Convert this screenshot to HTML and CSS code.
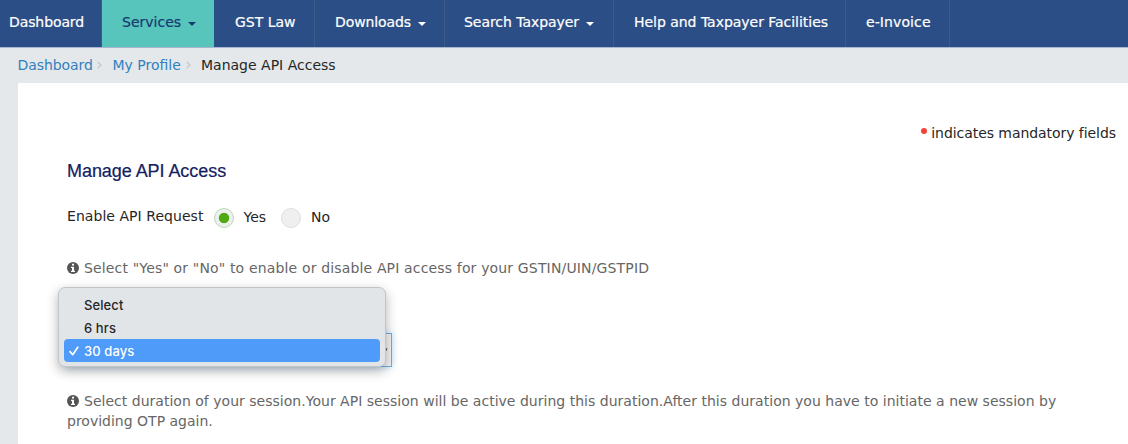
FILE: index.html
```html
<!DOCTYPE html>
<html lang="en">
<head>
<meta charset="utf-8">
<title>Manage API Access</title>
<link rel="stylesheet" href="styles.css">
</head>
<body>
<svg class="defs" width="0" height="0"><symbol id="info" viewBox="0 0 12 12"><circle cx="6" cy="6" r="6" fill="#555"/><path d="M5 1.7h2v1.7H5zM4 4.7h3v4h1V10H4V8.7h1V6H4z" fill="#fff"/></symbol></svg>
<nav class="nav">
  <a class="nav-item first"><span>Dashboard</span></a>
  <a class="nav-item services"><span>Services</span><i class="caret"></i></a>
  <a class="nav-item law"><span>GST Law</span></a>
  <a class="nav-item downloads"><span>Downloads</span><i class="caret"></i></a>
  <a class="nav-item search"><span>Search Taxpayer</span><i class="caret"></i></a>
  <a class="nav-item help"><span>Help and Taxpayer Facilities</span></a>
  <a class="nav-item invoice"><span>e-Invoice</span></a>
</nav>
<div class="crumbs">
  <a class="crumb-dash">Dashboard</a><svg class="chev" viewBox="0 0 5 8"><path d="M.7.7 4 4 .7 7.3"/></svg>
  <a class="crumb-profile">My Profile</a><svg class="chev" viewBox="0 0 5 8"><path d="M.7.7 4 4 .7 7.3"/></svg>
  <span class="crumb-here">Manage API Access</span>
</div>
<main class="panel">
  <p class="mandatory"><i class="dot"></i><span>indicates mandatory fields</span></p>
  <h1>Manage API Access</h1>
  <div class="request">
    <span class="label">Enable API Request</span>
    <i class="radio on"></i><span class="yes">Yes</span>
    <i class="radio"></i><span class="no">No</span>
  </div>
  <p class="note"><svg class="info"><use href="#info"/></svg><span class="note-a">Select "Yes" or "No" to enable or disable API access for your GSTIN/UIN/GSTPID</span></p>
  <div class="field">
    <div class="select"><svg class="arrow" viewBox="0 0 4 4"><path d="M0 1.5 3.5 0 2 3.5 0 4z"/></svg></div>
    <ul class="menu">
      <li>Select</li>
      <li>6 hrs</li>
      <li class="chosen"><svg class="check" viewBox="0 0 10 10"><path d="M1 5.6 3.7 8.7 8.8 1.2"/></svg>30 days</li>
    </ul>
  </div>
  <p class="note duration"><svg class="info"><use href="#info"/></svg><span class="note-b">Select duration of your session.Your API session will be active during this duration.After this duration you have to initiate a new session by</span><br><span class="note-c">providing OTP again.</span></p>
</main>
</body>
</html>
```
FILE: styles.css
```css
* { box-sizing: border-box; }
body { margin: 0; height: 444px; overflow: hidden; background: #e4e8eb; color: #262626; font: 14px/20px Verdana, "DejaVu Sans", sans-serif; white-space: nowrap; }
p, h1, ul { margin: 0; padding: 0; }
.defs { position: absolute; }
.nav { display: flex; height: 48px; background: #2c4e86; border-bottom: 1px solid #a9b6d3; }
.nav-item { display: flex; align-items: center; padding: 0 0 3px 20px; border-right: 1px solid #3d5a89; color: #fff; -webkit-text-stroke: .2px currentColor; }
.first { width: 102px; padding-left: 9px; letter-spacing: -.1px; }
.services { width: 112px; background: #57c5bc; color: #173a70; border-right: 0; }
.law { width: 101px; padding-left: 21px; }
.downloads { width: 130px; letter-spacing: -.1px; }
.search { width: 169px; letter-spacing: -.05px; padding-left: 19px; }
.help { width: 232px; letter-spacing: -.03px; }
.invoice { width: 104px; letter-spacing: .1px; }
.caret { margin: 3px 0 0 7px; border: 4px solid transparent; border-top-color: currentColor; border-bottom: 0; }
.crumbs { display: flex; align-items: center; height: 35px; padding: 0 0 1px 17.5px; }
.crumbs a { color: #3280bd; }
.crumb-dash { width: 79px; letter-spacing: -.08px; }
.crumb-profile { width: 73px; }
.crumb-here { margin-left: -.5px; }
.chev { width: 5px; height: 8px; margin-right: 11px; fill: none; stroke: #c4c8cc; stroke-width: 1.3; }
.panel { margin-left: 18px; height: 361px; background: #fff; padding: 40px 12px 0 49px; }
.mandatory { display: flex; justify-content: flex-end; gap: 4px; letter-spacing: -.06px; }
.dot { width: 6px; height: 6px; margin-top: 5px; border-radius: 50%; background: #f04438; }
h1 { margin-top: 16px; font: 18px/24px "Liberation Sans", Arial, sans-serif; color: #14205f; letter-spacing: -.06px; -webkit-text-stroke: .2px currentColor; }
.request { display: flex; align-items: center; margin-top: 22px; height: 24px; }
.label { width: 147px; padding-bottom: 2px; letter-spacing: .05px; }
.radio { width: 20px; height: 20px; margin-top: 1px; border: 1px solid #dedede; border-radius: 50%; background: #efefef; }
.radio.on { background: radial-gradient(circle, #4faa14 4.8px, #efefef 5.6px); border-color: #b9d9b4; }
.yes { width: 37.5px; margin-left: 9.5px; }
.no { margin-left: 10px; }
.note { margin-top: 29px; color: #666; }
.note-a { letter-spacing: .155px; }
.note-b { letter-spacing: .017px; }
.info { width: 12px; height: 12px; margin-right: 5px; vertical-align: -1px; }
.field { position: relative; height: 88px; padding-top: 55px; }
.select { display: flex; align-items: center; justify-content: flex-end; width: 325px; height: 34px; border: 1px solid #68afe6; background: #f3f3f4; box-shadow: 0 0 7px #8ec4ec99; padding-right: 3px; }
.arrow { width: 4px; height: 4px; fill: #333; }
.menu { position: absolute; left: -9px; top: 9px; width: 328px; height: 80px; padding: 5px 5px; list-style: none; border: 1px solid #c2c5c8; border-radius: 7px; background: #e1e5e8; box-shadow: 0 4px 12px #0000004d; font: 500 13px/25px Inter, sans-serif; letter-spacing: .1px; }
.menu li { position: relative; height: 23px; padding-left: 20px; }
.menu .chosen { border-radius: 4px; background: #4e9bfa; color: #fff; }
.check { position: absolute; left: 5px; top: 7px; width: 10px; height: 10px; fill: none; stroke: #fff; stroke-width: 1.7; stroke-linecap: round; stroke-linejoin: round; }
.note.duration { margin-top: 25px; }
```
